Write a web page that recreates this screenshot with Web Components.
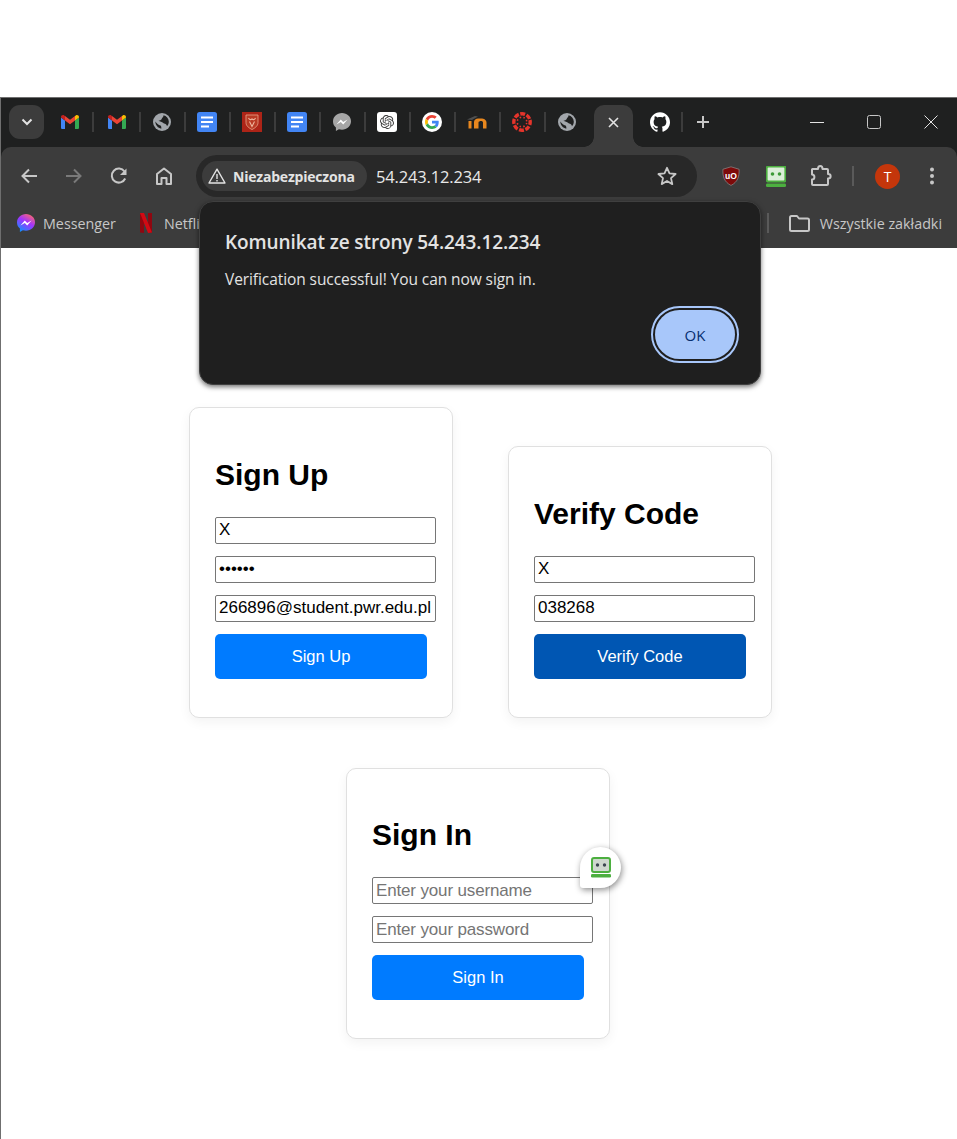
<!DOCTYPE html>
<html lang="pl">
<head>
<meta charset="utf-8">
<title>54.243.12.234</title>
<style>
  html, body { margin: 0; padding: 0; background: #fff; }
  body { font-family: "Liberation Sans", Arial, sans-serif; overflow: hidden; height: 1139px; }
</style>
</head>
<body>
<browser-window>
  <tab-strip slot="tabs"></tab-strip>
  <nav-toolbar slot="toolbar"></nav-toolbar>
  <bookmark-bar slot="bookmarks"></bookmark-bar>

  <card-row>
    <form-card heading="Sign Up">
      <text-field>X</text-field>
      <text-field>••••••</text-field>
      <text-field>266896@student.pwr.edu.pl</text-field>
      <action-button>Sign Up</action-button>
    </form-card>
    <form-card heading="Verify Code">
      <text-field>X</text-field>
      <text-field>038268</text-field>
      <action-button active>Verify Code</action-button>
    </form-card>
  </card-row>
  <card-row single>
    <form-card heading="Sign In" tight>
      <text-field placeholder>Enter your username<roboform-badge></roboform-badge></text-field>
      <text-field placeholder>Enter your password</text-field>
      <action-button>Sign In</action-button>
    </form-card>
  </card-row>

  <alert-dialog slot="dialog" title-text="Komunikat ze strony 54.243.12.234">Verification successful! You can now sign in.</alert-dialog>
</browser-window>

<script>
(function () {
  const UI_FONT = '"Open Sans", "Noto Sans", sans-serif';

  // every icon is a body for an svg: [viewBox, width, height, markup]
  const ICONS = {
    gmail: ["0 0 18 14", 18, 14, `
      <path fill="#4285f4" d="M0 2.5v10.2C0 13.4.6 14 1.3 14H4V5.5z"/>
      <path fill="#34a853" d="M14 5.5V14h2.7c.7 0 1.3-.6 1.3-1.3V2.5z"/>
      <path fill="#ea4335" d="M4 5.5 9 9.2l5-3.7V1L9 4.8 4 1z"/>
      <path fill="#fbbc04" d="M14 1v4.5l4-3V2c0-1.600-2-2.500-3.200-1.500z"/>
      <path fill="#c5221f" d="M0 2v.5l4 3V1l-.800-.500C2-.400 0 .400 0 2z"/>`],
    globe: ["0 0 18 18", 18, 18, `
      <circle cx="9" cy="9" r="9" fill="#a2a6ab"/>
      <path fill="#1f2020" d="M10.500 2.300C13.500 3 15.600 5.500 15.800 8.500 15.800 10.500 15.100 12 14 13.200 13.500 11.700 12.500 10.700 11 10.600 9.500 8.600 6.500 9.100 5.500 7.600 7.500 7.600 9 6.500 9 5 10 4.500 10.500 3.500 10.500 2.300z"/>
      <path fill="#1f2020" d="M2.300 8.500C2.500 12.500 5 15 8.300 15.700 8.500 14.100 8.200 13.100 7.500 12.600 5.500 12 3.500 10 2.300 8.500z"/>`],
    docs: ["0 0 20 20", 20, 20, `
      <rect width="20" height="20" rx="2.500" fill="#4285f4"/>
      <rect x="4" y="4.500" width="12" height="2" fill="#fff"/>
      <rect x="4" y="9" width="12" height="2" fill="#fff"/>
      <rect x="4" y="13.500" width="8" height="2" fill="#fff"/>`],
    pwr: ["0 0 20 20", 20, 20, `
      <rect width="20" height="20" fill="#ad2417"/>
      <path fill="#b93a24" stroke="#e39a80" stroke-width=".9" d="M4 3h12v7.500c0 3.500-3 5.500-6 7-3-1.500-6-3.500-6-7z"/>
      <path fill="none" stroke="#eeb59e" stroke-width="1.100" d="M6.500 6c1 2 2.500 2 3.500 1 1 1 2.500 1 3.500-1M7.500 9.500 10 14.500l2.500-5"/>`],
    messengerGray: ["0 0 18 18", 18, 18, `
      <path fill="#a6a6a6" d="M9 0C4 0 0 3.700 0 8.400c0 2.500 1.100 4.600 2.900 6.100V18l3-1.700c1 .300 2 .400 3.100.400 5 0 9-3.700 9-8.400S14 0 9 0z"/>
      <path fill="#fff" d="m3.400 11.400 4.400-4.900 2.400 2.400 4.400-2.400-4.400 4.900-2.400-2.400z"/>`],
    messenger: ["0 0 18 18", 18, 18, `
      <defs><linearGradient id="m" x1=".8" y1="0" x2=".2" y2="1"><stop offset="0" stop-color="#ff6a68"/><stop offset=".45" stop-color="#a033ff"/><stop offset="1" stop-color="#0a93ff"/></linearGradient></defs>
      <path fill="url(#m)" d="M9 0C4 0 0 3.700 0 8.400c0 2.500 1.100 4.600 2.900 6.100V18l3-1.700c1 .300 2 .400 3.100.400 5 0 9-3.700 9-8.400S14 0 9 0z"/>
      <path fill="#fff" d="m3.400 11.400 4.400-4.900 2.400 2.400 4.400-2.400-4.400 4.900-2.400-2.400z"/>`],
    openai: ["0 0 20 20", 20, 20, `
      <rect width="20" height="20" rx="3" fill="#fff"/>
      <g transform="translate(3 3) scale(.583)"><path fill="#3a3a3a" d="M22.282 9.821a5.985 5.985 0 0 0-.516-4.911 6.046 6.046 0 0 0-6.510-2.900A6.065 6.065 0 0 0 4.981 4.182a5.985 5.985 0 0 0-3.998 2.900 6.046 6.046 0 0 0 .743 7.097 5.980 5.980 0 0 0 .511 4.911 6.051 6.051 0 0 0 6.515 2.900A5.985 5.985 0 0 0 13.260 24a6.056 6.056 0 0 0 5.772-4.206 5.989 5.989 0 0 0 3.998-2.900 6.056 6.056 0 0 0-.748-7.073zM13.260 22.429a4.476 4.476 0 0 1-2.876-1.041l.142-.080 4.778-2.758a.795.795 0 0 0 .393-.681v-6.737l2.020 1.169a.071.071 0 0 1 .038.052v5.583a4.504 4.504 0 0 1-4.495 4.493zM3.600 18.304a4.471 4.471 0 0 1-.535-3.014l.142.085 4.783 2.758a.771.771 0 0 0 .781 0l5.843-3.369v2.333a.080.080 0 0 1-.033.061L9.740 19.950a4.499 4.499 0 0 1-6.141-1.646zM2.341 7.896a4.485 4.485 0 0 1 2.365-1.973V11.600a.766.766 0 0 0 .388.677l5.814 3.354-2.020 1.169a.076.076 0 0 1-.071 0l-4.830-2.787a4.504 4.504 0 0 1-1.646-6.117zm16.596 3.856-5.833-3.388L15.119 7.200a.076.076 0 0 1 .071 0l4.830 2.791a4.494 4.494 0 0 1-.676 8.104v-5.677a.790.790 0 0 0-.407-.667zm2.011-3.023-.142-.085-4.774-2.782a.776.776 0 0 0-.785 0L9.409 9.230V6.897a.066.066 0 0 1 .028-.061l4.830-2.787a4.499 4.499 0 0 1 6.680 4.660zM8.307 12.863l-2.020-1.164a.080.080 0 0 1-.038-.057V6.074a4.499 4.499 0 0 1 7.376-3.454l-.142.081L8.704 5.459a.795.795 0 0 0-.393.681zm1.098-2.365 2.602-1.500 2.607 1.500v3l-2.597 1.500-2.607-1.500z"/></g>`],
    google: ["0 0 20 20", 20, 20, `
      <circle cx="10" cy="10" r="10" fill="#fff"/>
      <g transform="translate(3 3) scale(.292)">
      <path fill="#ea4335" d="M24 9.500c3.540 0 6.710 1.220 9.210 3.600l6.850-6.850C35.900 2.380 30.470 0 24 0 14.620 0 6.510 5.380 2.560 13.220l7.980 6.190C12.430 13.720 17.740 9.500 24 9.500z"/>
      <path fill="#4285f4" d="M46.980 24.550c0-1.570-.150-3.090-.380-4.550H24v9.020h12.940c-.580 2.960-2.260 5.480-4.780 7.180l7.730 6c4.510-4.180 7.090-10.360 7.090-17.650z"/>
      <path fill="#fbbc05" d="M10.530 28.590c-.480-1.450-.760-2.990-.760-4.590s.270-3.140.760-4.590l-7.980-6.190C.920 16.460 0 20.120 0 24c0 3.880.920 7.540 2.560 10.780l7.970-6.190z"/>
      <path fill="#34a853" d="M24 48c6.480 0 11.930-2.130 15.890-5.810l-7.730-6c-2.150 1.450-4.920 2.300-8.160 2.300-6.260 0-11.570-4.220-13.470-9.910l-7.980 6.190C6.510 42.620 14.620 48 24 48z"/>
      </g>`],
    moodle: ["0 0 20 20", 20, 20, `
      <path fill="#4f4f4f" d="M0 7.500 8 4l3 .500-6 3.500z"/>
      <path fill="#e8871e" d="M1.500 9h3v7.500h-3z"/>
      <path fill="#e8871e" d="M7 16.500v-6.500c0-2 2-3.500 4-3.500h3c3 0 5.500 1.500 5.500 4v6H16v-6c0-1-1-1.500-2-1.500s-2.500 .500-2.500 1.500v6z"/>`],
    canvas: ["0 0 20 20", 20, 20, `
      <g fill="none" stroke="#e5342b">
      <circle cx="10" cy="10" r="8.200" stroke-width="3.400" stroke-dasharray="4.900 1.540" transform="rotate(-14 10 10)"/>
      <circle cx="10" cy="10" r="4.800" stroke-width="1.600" stroke-dasharray="1.500 2.270" transform="rotate(10 10 10)"/></g>`],
    github: ["0 0 24 24", 20, 20, `
      <path fill="#fff" d="M12 .297c-6.630 0-12 5.373-12 12 0 5.303 3.438 9.800 8.205 11.385.600.113.820-.258.820-.577 0-.285-.010-1.040-.015-2.040-3.338.724-4.042-1.610-4.042-1.610C4.422 18.070 3.633 17.700 3.633 17.700c-1.087-.744.084-.729.084-.729 1.205.084 1.838 1.236 1.838 1.236 1.070 1.835 2.809 1.305 3.495.998.108-.776.417-1.305.760-1.605-2.665-.300-5.466-1.332-5.466-5.930 0-1.310.465-2.380 1.235-3.220-.135-.303-.540-1.523.105-3.176 0 0 1.005-.322 3.300 1.230.960-.267 1.980-.399 3-.405 1.020.006 2.040.138 3 .405 2.280-1.552 3.285-1.230 3.285-1.230.645 1.653.240 2.873.120 3.176.765.840 1.230 1.910 1.230 3.220 0 4.610-2.805 5.625-5.475 5.920.420.360.810 1.096.810 2.220 0 1.606-.015 2.896-.015 3.286 0 .315.210.690.825.570C20.565 22.092 24 17.592 24 12.297c0-6.627-5.373-12-12-12"/>`],
    chevron: ["0 0 12 8", 12, 8, `<path fill="none" stroke="#e3e3e3" stroke-width="2" d="m1.500 1.500 4.500 4.500 4.500-4.500"/>`],
    close: ["0 0 11 11", 11, 11, `<path fill="none" stroke="#e3e3e3" stroke-width="1.600" d="m1 1 9 9M10 1l-9 9"/>`],
    plus: ["0 0 14 14", 14, 14, `<path fill="none" stroke="#c7c7c7" stroke-width="2" d="M7 1v12M1 7h12"/>`],
    winMin: ["0 0 14 14", 14, 14, `<path stroke="#e3e3e3" stroke-width="1" d="M0 7.500h14"/>`],
    winMax: ["0 0 14 14", 14, 14, `<rect x=".5" y=".5" width="13" height="13" rx="2" fill="none" stroke="#c7c7c7"/>`],
    winClose: ["0 0 14 14", 14, 14, `<path fill="none" stroke="#e3e3e3" d="m.5.500 13 13M13.500.500l-13 13"/>`],
    back: ["0 0 20 20", 20, 20, `<path fill="none" stroke="#c7c7c7" stroke-width="2" d="M18 10H3.500M10 3.500 3.500 10l6.500 6.500"/>`],
    forward: ["0 0 20 20", 20, 20, `<path fill="none" stroke="#7a7a7a" stroke-width="2" d="M2 10h14.500M10 3.500l6.500 6.500-6.500 6.500"/>`],
    reload: ["0 0 20 20", 20, 20, `<path fill="none" stroke="#c7c7c7" stroke-width="2" d="M16.200 12.500A7 7 0 1 1 15.500 5.500"/><path fill="#c7c7c7" d="M17.500 2.500v6.500H11z"/>`],
    home: ["0 0 20 20", 20, 20, `<path fill="none" stroke="#c7c7c7" stroke-width="2" stroke-linejoin="round" d="M3 18V8l7-5.500L17 8v10h-4.500v-6h-5v6z"/>`],
    warning: ["0 0 18 16", 18, 16, `<path fill="none" stroke="#e3e3e3" stroke-width="1.400" stroke-linejoin="round" d="M9 1.200 17 15H1z"/><path stroke="#e3e3e3" stroke-width="1.400" d="M9 6v5M9 12v1.500"/>`],
    star: ["0 0 20 20", 20, 20, `<path fill="none" stroke="#c7c7c7" stroke-width="1.800" stroke-linejoin="round" d="m10 1.800 2.500 5.600 6.100.600-4.600 4.100 1.300 6-5.300-3.100-5.300 3.100 1.300-6L1.400 8l6.100-.600z"/>`],
    ublock: ["0 0 20 22", 18, 20, `
      <path fill="#7d0a0a" stroke="#8c8c8c" stroke-width=".8" d="M10 .8 19 3.500c.300 8.500-1.500 14-9 18C2.500 17.500.700 12 1 3.500z"/>
      <text x="10" y="14" text-anchor="middle" font-family="Liberation Sans, sans-serif" font-weight="700" font-size="9.500" fill="#fff">uO</text>`],
    roboform: ["0 0 20 21", 20, 21, `
      <rect x=".5" y=".5" width="19" height="15" rx="2" fill="#dcefd9" stroke="#4caf3f" stroke-width="2.200"/>
      <circle cx="6.500" cy="8" r="1.800" fill="#3d9a36"/><circle cx="13.500" cy="8" r="1.800" fill="#3d9a36"/>
      <rect y="17.500" width="20" height="3.500" rx="1.200" fill="#4caf3f"/>`],
    roboformDark: ["0 0 20 21", 20, 21, `
      <rect x="1" y="1" width="18" height="14" rx="2" fill="#cfd8cf" stroke="#4caf3f" stroke-width="2"/>
      <circle cx="6.500" cy="8" r="1.700" fill="#3c4650"/><circle cx="13.500" cy="8" r="1.700" fill="#3c4650"/>
      <rect y="17" width="20" height="3.500" rx="1.200" fill="#4caf3f"/>`],
    puzzle: ["0 0 22 22", 22, 22, `<path fill="none" stroke="#c7c7c7" stroke-width="2" stroke-linejoin="round" d="M2.500 4H8C8 0 12.500 0 12.500 4H17a1 1 0 0 1 1 1v4c3.500 0 3.500 4.500 0 4.500V19a1 1 0 0 1-1 1H3a1 1 0 0 1-1-1v-4.500c3.200 0 3.200-5 0-5V4.500z"/>`],
    dots: ["0 0 6 20", 6, 20, `<g fill="#c7c7c7"><circle cx="3" cy="3.500" r="2"/><circle cx="3" cy="10" r="2"/><circle cx="3" cy="16.500" r="2"/></g>`],
    netflix: ["0 0 12 20", 12, 20, `<path fill="#8f0710" d="M0 0h4v20l-4-.500zM8 0h4v19.500L8 20z"/><path fill="#d20a14" d="M0 0h4l8 19.500L8 20z"/>`],
    folder: ["0 0 21 17", 21, 17, `<path fill="none" stroke="#c7c7c7" stroke-width="2" stroke-linejoin="round" d="M2.500 1h5.500l2 2.500h8.500a1.500 1.500 0 0 1 1.500 1.500v9.500a1.500 1.500 0 0 1-1.500 1.500h-16A1.500 1.500 0 0 1 1 14.500V2.500A1.500 1.500 0 0 1 2.500 1z"/>`]
  };

  customElements.define(
    "app-icon",
    class extends HTMLElement {
      constructor() {
        super();
        const root = this.attachShadow({ mode: "open" });
        const [box, w, h, body] = ICONS[this.getAttribute("name")];
        const size = this.getAttribute("box") || w;
        root.innerHTML = `
        <style>
          :host { display: flex; flex: none; align-items: center; justify-content: center; width: ${size}px; height: ${this.getAttribute("box") || h}px; }
          svg { display: block; flex: none; }
        </style>
        <svg xmlns="http://www.w3.org/2000/svg" viewBox="${box}" width="${w}" height="${h}">${body}</svg>
        `;
      }
    }
  );

  customElements.define(
    "browser-window",
    class extends HTMLElement {
      constructor() {
        super();
        this.attachShadow({ mode: "open" }).innerHTML = `
        <style>
          :host { display: block; position: relative; margin-top: 97px; height: 1042px; border-top: 1px solid #6f6f6f; border-left: 1px solid #6f6f6f; box-sizing: border-box; background: #fff; overflow: hidden; }
          .frame { background: #1f2020; }
          main { display: flex; flex-direction: column; padding-top: 159px; }
        </style>
        <div class="frame">
          <slot name="tabs"></slot>
          <slot name="toolbar"></slot>
          <slot name="bookmarks"></slot>
        </div>
        <main><slot></slot></main>
        <slot name="dialog"></slot>
        `;
      }
    }
  );

  customElements.define(
    "tab-strip",
    class extends HTMLElement {
      constructor() {
        super();
        const pinned = ["gmail", "gmail", "globe", "docs", "pwr", "docs", "messengerGray", "openai", "google", "moodle", "canvas", "globe"];
        const cells = pinned.map((name, i) => `
          <div class="cell ${i === 1 ? "wide" : ""}"><app-icon name="${name}" box="20"></app-icon></div>
          ${i < pinned.length - 1 ? '<div class="sep"></div>' : ""}`).join("");
        this.attachShadow({ mode: "open" }).innerHTML = `
        <style>
          :host { display: flex; align-items: flex-end; height: 49px; color: #e3e3e3; }
          .menu { width: 35px; height: 34px; margin: 0 5px 8px 8px; border-radius: 11px; background: #3c3c3c; display: flex; align-items: center; justify-content: center; }
          .cell { width: 32px; padding-left: 11px; height: 20px; margin-bottom: 15px; display: flex; }
          .cell.wide { width: 32px; padding-left: 13px; }
          .sep { width: 2px; height: 20px; margin-bottom: 15px; background: #3c3c3c; }
          .active { position: relative; width: 39px; height: 42px; margin-left: 5px; background: #3c3c3c; border-radius: 10px 10px 0 0; display: flex; justify-content: center; padding-top: 12px; box-sizing: border-box; }
          .active::before, .active::after { content: ""; position: absolute; bottom: 0; width: 10px; height: 10px; }
          .active::before { left: -10px; background: radial-gradient(circle at 0 0, #1f2020 9.500px, #3c3c3c 10px); }
          .active::after { right: -10px; background: radial-gradient(circle at 100% 0, #1f2020 9.500px, #3c3c3c 10px); }
          .github { margin: 0 0 15px 17px; }
          .sep.last { margin-left: 11px; }
          .plus { margin: 0 0 18px 13px; }
          .win { display: flex; margin-left: auto; margin-bottom: 18px; padding-right: 19px; gap: 43px; }
        </style>
        <div class="menu"><app-icon name="chevron"></app-icon></div>
        ${cells}
        <div class="active"><app-icon name="close"></app-icon></div>
        <app-icon class="github" name="github"></app-icon>
        <div class="sep last"></div>
        <app-icon class="plus" name="plus"></app-icon>
        <div class="win">
          <app-icon name="winMin"></app-icon>
          <app-icon name="winMax"></app-icon>
          <app-icon name="winClose"></app-icon>
        </div>
        `;
      }
    }
  );

  customElements.define(
    "nav-toolbar",
    class extends HTMLElement {
      constructor() {
        super();
        this.attachShadow({ mode: "open" }).innerHTML = `
        <style>
          :host { display: flex; align-items: center; height: 53px; padding: 5px 0 0 5px; background: #3c3c3c; border-radius: 10px 10px 0 0; box-sizing: border-box; font-family: ${UI_FONT}; }
          .btn { width: 45px; display: flex; justify-content: center; }
          .omni { display: flex; align-items: center; width: 501px; height: 42px; margin-left: 10px; padding: 0 20px 0 6px; box-sizing: border-box; border-radius: 21px; background: #282828; }
          .chip { display: flex; align-items: center; height: 30px; width: 165px; padding-left: 6px; box-sizing: border-box; border-radius: 15px; background: #3c3c3c; color: #e3e3e3; font-size: 14px; font-weight: 700; letter-spacing: -.2px; white-space: nowrap; }
          .chip app-icon { margin-right: 7px; }
          .url { margin-left: 9px; color: #e8e8e8; font-size: 16.500px; letter-spacing: -.15px; }
          .omni .star { margin-left: auto; }
          .sep { width: 2px; height: 20px; margin-left: 9px; background: #5a5a5a; }
          .avatar { width: 25px; height: 25px; margin-left: 21px; border-radius: 50%; background: #c4360b; color: #fff; font-size: 14px; display: flex; align-items: center; justify-content: center; }
          .dots { margin-left: 29px; }
          .first { margin-left: 11px; }
        </style>
        <div class="btn"><app-icon name="back"></app-icon></div>
        <div class="btn"><app-icon name="forward"></app-icon></div>
        <div class="btn"><app-icon name="reload"></app-icon></div>
        <div class="btn"><app-icon name="home"></app-icon></div>
        <div class="omni">
          <div class="chip"><app-icon name="warning"></app-icon>Niezabezpieczona</div>
          <span class="url">54.243.12.234</span>
          <app-icon class="star" name="star"></app-icon>
        </div>
        <div class="btn first"><app-icon name="ublock"></app-icon></div>
        <div class="btn"><app-icon name="roboform"></app-icon></div>
        <div class="btn"><app-icon name="puzzle"></app-icon></div>
        <div class="sep"></div>
        <div class="avatar">T</div>
        <app-icon class="dots" name="dots"></app-icon>
        `;
      }
    }
  );

  customElements.define(
    "bookmark-bar",
    class extends HTMLElement {
      constructor() {
        super();
        this.attachShadow({ mode: "open" }).innerHTML = `
        <style>
          :host { display: flex; align-items: center; height: 48px; padding: 0 15px 2px 16px; background: #3c3c3c; box-sizing: border-box; color: #c7c7c7; font-family: ${UI_FONT}; font-size: 14.300px; white-space: nowrap; }
          .mark { display: flex; align-items: center; gap: 8px; }
          .netflix { margin-left: 24px; gap: 12px; }
          .end { margin-left: auto; gap: 10px; }
          .sep { width: 2px; height: 20px; margin-right: 10px; background: #5a5a5a; }
        </style>
        <div class="mark"><app-icon name="messenger"></app-icon><span>Messenger</span></div>
        <div class="mark netflix"><app-icon name="netflix"></app-icon><span>Netflix</span></div>
        <div class="mark end"><div class="sep"></div><app-icon name="folder"></app-icon><span>Wszystkie zakładki</span></div>
        `;
      }
    }
  );

  customElements.define(
    "card-row",
    class extends HTMLElement {
      constructor() {
        super();
        this.attachShadow({ mode: "open" }).innerHTML = `
        <style>
          :host { display: flex; align-items: flex-end; justify-content: flex-start; gap: 55px; padding-left: 188px; margin-bottom: 50px; }
          :host([single]) { padding-left: 345px; }
        </style>
        <slot></slot>
        `;
      }
    }
  );

  customElements.define(
    "form-card",
    class extends HTMLElement {
      constructor() {
        super();
        this.attachShadow({ mode: "open" }).innerHTML = `
        <style>
          :host { display: block; position: relative; width: 264px; box-sizing: border-box; padding: 25px 25px 38px; background: #fff; border: 1px solid #e0e0e0; border-radius: 10px; box-shadow: 0 4px 12px rgba(0, 0, 0, .05); font-family: "Liberation Sans", Arial, sans-serif; }
          h2 { margin: 25px 0; font-size: 30px; line-height: 34px; font-weight: 700; color: #000; }
          :host([tight]) h2 { margin-top: 24px; }
          .stack { display: flex; flex-direction: column; gap: 12px; }
        </style>
        <h2>${this.getAttribute("heading")}</h2>
        <div class="stack"><slot></slot></div>
        `;
      }
    }
  );

  customElements.define(
    "text-field",
    class extends HTMLElement {
      constructor() {
        super();
        this.attachShadow({ mode: "open" }).innerHTML = `
        <style>
          :host { display: block; position: relative; width: 221px; height: 27px; box-sizing: border-box; padding: 0 3px; border: 1px solid #767676; border-radius: 2px; background: #fff; color: #000; font-size: 17px; line-height: 23px; white-space: nowrap; }
          :host([placeholder]) { padding-top: 1px; color: #757575; letter-spacing: -.15px; }
        </style>
        <slot></slot>
        `;
      }
    }
  );

  customElements.define(
    "action-button",
    class extends HTMLElement {
      constructor() {
        super();
        this.attachShadow({ mode: "open" }).innerHTML = `
        <style>
          :host { display: flex; align-items: center; justify-content: center; width: 212px; height: 45px; border-radius: 5px; background: #007bff; color: #fff; font-size: 16.500px; }
          :host([active]) { background: #0056b3; }
        </style>
        <slot></slot>
        `;
      }
    }
  );

  customElements.define(
    "roboform-badge",
    class extends HTMLElement {
      constructor() {
        super();
        this.attachShadow({ mode: "open" }).innerHTML = `
        <style>
          :host { position: absolute; right: -29px; top: -31px; width: 41px; height: 41px; display: flex; align-items: center; justify-content: center; background: #fff; border-radius: 50% 50% 50% 3px; box-shadow: 1px 2px 6px rgba(0, 0, 0, .45); letter-spacing: 0; }
        </style>
        <app-icon name="roboformDark"></app-icon>
        `;
      }
    }
  );

  customElements.define(
    "alert-dialog",
    class extends HTMLElement {
      constructor() {
        super();
        this.attachShadow({ mode: "open" }).innerHTML = `
        <style>
          :host { position: absolute; left: 198px; top: 103px; width: 562px; height: 184px; box-sizing: border-box; padding: 26px 25px 0; display: flex; flex-direction: column; background: #1f1f1f; border: 1px solid #3f3f3f; border-radius: 14px; box-shadow: 0 2px 5px rgba(0, 0, 0, .55); color: #e3e3e3; font-family: ${UI_FONT}; }
          h1 { margin: 0; font-size: 19px; line-height: 28px; font-weight: 600; letter-spacing: -.1px; }
          p { margin: 13px 0 0; font-size: 15.500px; line-height: 20px; letter-spacing: -.08px; }
          .actions { display: flex; justify-content: flex-end; margin: 21px 0 0; }
          button { width: 80px; height: 49px; padding: 0; border: 0; border-radius: 25px; background: #a8c7fa; color: #062e6f; font: 500 15px ${UI_FONT}; outline: 2px solid #a8c7fa; outline-offset: 2px; }
        </style>
        <h1>${this.getAttribute("title-text")}</h1>
        <p><slot></slot></p>
        <div class="actions"><button type="button">OK</button></div>
        `;
      }
    }
  );
})();
</script>
</body>
</html>
